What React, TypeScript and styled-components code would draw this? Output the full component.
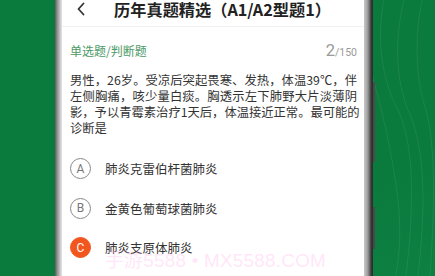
import React from "react";
import styled, { createGlobalStyle } from "styled-components";

const Global = createGlobalStyle`
  html, body { margin: 0; padding: 0; }
  body {
    width: 435px; height: 276px; overflow: hidden;
    background: #0b7a3d;
    font-family: "Noto Sans CJK SC", "Noto Sans", sans-serif;
  }
  #root { width: 435px; height: 276px; }
`;

const Stage = styled.div`
  position: relative;
  width: 435px;
  height: 276px;
  overflow: hidden;
  background: linear-gradient(165deg, #0b7a3d 0%, #0b7a3d 70%, #0d8042 100%);
`;

const Waves = styled.svg`
  position: absolute;
  top: 0;
  right: 0;
  pointer-events: none;
`;

const Phone = styled.div`
  position: relative;
  margin-left: 55px;
  width: 318px;
  height: 276px;
  display: flex;
  background: linear-gradient(90deg, #5a5a5a 0px, #8a8a8a 2px, #c4c4c4 5px, #e6e6e6 7px, transparent 7px, transparent 308px, #d2d2d2 308px, #a8a8a8 312px, #7a7a7a 314px, #3c3c3c 316px, #2a2a2a 318px);
  padding: 0 9px 0 7px;
  box-sizing: border-box;
`;

const SideButton = styled.div<{ $top: number; $h: number }>`
  position: absolute;
  right: -2px;
  top: ${(p) => p.$top}px;
  width: 2px;
  height: ${(p) => p.$h}px;
  background: #4a4a4a;
`;

const Screen = styled.div`
  flex: 1;
  background: #ffffff;
  display: flex;
  flex-direction: column;
  overflow: hidden;
`;

const Header = styled.div`
  height: 27px;
  flex-shrink: 0;
  display: flex;
  align-items: flex-start;
  border-bottom: 1px solid #f1f1f1;
  box-sizing: border-box;
  position: relative;
`;

const Back = styled.svg`
  position: absolute;
  left: 14px;
  top: 2px;
`;

const Title = styled.div`
  flex: 1;
  text-align: center;
  font-size: 16.2px;
  font-weight: 700;
  color: #222;
  line-height: 18px;
  padding-left: 19px;
  white-space: nowrap;
`;

const Body = styled.div`
  padding: 0 7px 0 8px;
  display: flex;
  flex-direction: column;
  flex-shrink: 0;
`;

const MetaRow = styled.div`
  display: flex;
  justify-content: space-between;
  align-items: baseline;
  margin-top: 14px;
  height: 20px;
`;

const Kind = styled.span`
  font-size: 12px;
  color: #4c9a66;
`;

const Counter = styled.span`
  color: #9a9a9a;
  font-family: "Roboto", "Liberation Sans", sans-serif;
  font-size: 10.5px;
`;

const Big = styled.span`
  font-size: 16.5px;
`;

const Question = styled.div`
  margin-top: 11px;
  font-size: 12.3px;
  line-height: 16px;
  color: #333;
`;

const QLine = styled.span<{ $last?: boolean }>`
  display: block;
  white-space: nowrap;
  text-align: ${(p) => (p.$last ? "left" : "justify")};
  text-align-last: ${(p) => (p.$last ? "left" : "justify")};
`;

const Options = styled.div`
  display: flex;
  flex-direction: column;
  margin-top: 22px;
  gap: 18.5px;
`;

const Option = styled.div`
  display: flex;
  align-items: center;
  height: 21px;
`;

const Badge = styled.div<{ $active?: boolean }>`
  width: 21px;
  height: 21px;
  border-radius: 50%;
  box-sizing: border-box;
  border: 1px solid ${(p) => (p.$active ? "#f0561e" : "#8a8a8a")};
  background: ${(p) => (p.$active ? "#f0561e" : "#fff")};
  color: ${(p) => (p.$active ? "#fff" : "#777")};
  display: flex;
  align-items: center;
  justify-content: center;
  font-family: "Roboto", "Liberation Sans", sans-serif;
  font-size: 12px;
  flex-shrink: 0;
`;

const OptText = styled.span`
  margin-left: 14px;
  font-size: 12.5px;
  color: #333;
`;

const Watermark = styled.div`
  position: absolute;
  left: 105px;
  top: 245px;
  font-family: "Liberation Sans", "Noto Sans CJK SC", sans-serif;
  font-size: 18.8px;
  color: rgba(255, 185, 235, 0.36);
  white-space: nowrap;
  pointer-events: none;
  letter-spacing: 0.3px;
`;

const questionLines = [
  "男性，26岁。受凉后突起畏寒、发热，体温39℃，伴",
  "左侧胸痛，咳少量白痰。胸透示左下肺野大片淡薄阴",
  "影，予以青霉素治疗1天后，体温接近正常。最可能的",
  "诊断是",
];

const options = [
  { key: "A", text: "肺炎克雷伯杆菌肺炎" },
  { key: "B", text: "金黄色葡萄球菌肺炎" },
  { key: "C", text: "肺炎支原体肺炎", active: true },
  { key: "D", text: "病毒性肺炎" },
];

export default function App() {
  return (
    <>
      <Global />
      <Stage>
        <Waves width="63" height="276" viewBox="0 0 63 276">
          <g fill="none" stroke="rgba(255,255,255,0.07)" strokeWidth="1">
            <path d="M12 0 C4 40 10 80 26 110 C40 140 44 190 34 276" />
            <path d="M32 0 C22 40 24 80 36 110 C50 140 56 190 46 276" />
            <path d="M50 0 C42 40 44 80 54 110 C62 140 64 190 58 276" />
            <path d="M-4 60 C10 110 20 150 26 200 C30 240 26 260 24 276" />
          </g>
        </Waves>
        <Phone>
          <SideButton $top={82} $h={80} />
          <SideButton $top={207} $h={42} />
          <Screen>
            <Header>
              <Back width="10" height="14" viewBox="0 0 10 14">
                <path d="M7.5 1.5 L2.5 7 L7.5 12.5" fill="none" stroke="#333" strokeWidth="1.8" strokeLinecap="round" strokeLinejoin="round" />
              </Back>
              <Title>历年真题精选（A1/A2型题1）</Title>
            </Header>
            <Body>
              <MetaRow>
                <Kind>单选题/判断题</Kind>
                <Counter>
                  <Big>2</Big>/150
                </Counter>
              </MetaRow>
              <Question>
                {questionLines.map((l, i) => (
                  <QLine key={i} $last={i === questionLines.length - 1}>
                    {l}
                  </QLine>
                ))}
              </Question>
              <Options>
                {options.map((o) => (
                  <Option key={o.key}>
                    <Badge $active={o.active}>{o.key}</Badge>
                    <OptText>{o.text}</OptText>
                  </Option>
                ))}
              </Options>
            </Body>
          </Screen>
        </Phone>
        <Watermark>手游5588 • MX5588.COM</Watermark>
      </Stage>
    </>
  );
}
